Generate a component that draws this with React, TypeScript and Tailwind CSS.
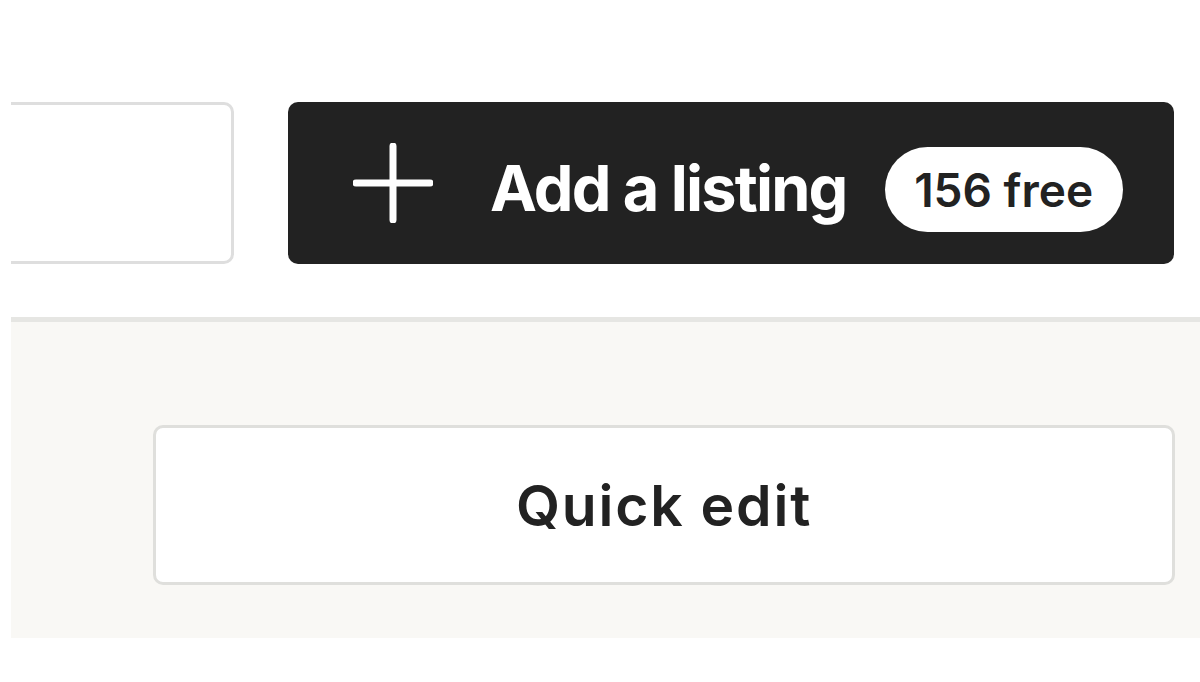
import React from "react";

export default function App() {
  return (
    <div
      className="w-[1200px] h-[682px] bg-white overflow-hidden"
      style={{ fontFamily: "Inter, 'Liberation Sans', sans-serif" }}
    >
      <div className="ml-[11px] overflow-hidden">
        {/* top row */}
        <div className="h-[317px] pt-[102px] flex items-start">
          <div className="shrink-0 w-[240px] h-[162px] ml-[-17px] rounded-[10px] border-[3px] border-[#dedede] bg-white" />
          <button className="shrink-0 ml-[54px] w-[886px] h-[162px] rounded-[10px] bg-[#222222] flex items-center pl-[65px] text-white">
            <svg width="80" height="80" viewBox="0 0 80 80" className="shrink-0">
              <path d="M40 3V77M3 40H77" stroke="white" strokeWidth="7" strokeLinecap="round" />
            </svg>
            <span className="ml-[57px] mt-[10px] text-[63px] font-bold leading-none tracking-[-1.8px]">Add a listing</span>
            <span className="ml-[38px] mt-[13px] h-[85px] w-[238px] rounded-full bg-white text-[#222222] flex items-center justify-center text-[46px] font-semibold leading-none tracking-[0px]">
              156 free
            </span>
          </button>
        </div>
        {/* divider */}
        <div className="h-[5px] bg-[#e6e6e3]" />
        {/* beige panel */}
        <div className="h-[316px] bg-[#f9f8f5] pt-[103px] pl-[142px]">
          <button className="w-[1022px] h-[160px] rounded-[10px] border-[3px] border-[#dfdfdc] bg-white flex items-center justify-center text-[#222222] text-[57px] font-semibold leading-none tracking-[1.8px]">
            Quick edit
          </button>
        </div>
      </div>
    </div>
  );
}
